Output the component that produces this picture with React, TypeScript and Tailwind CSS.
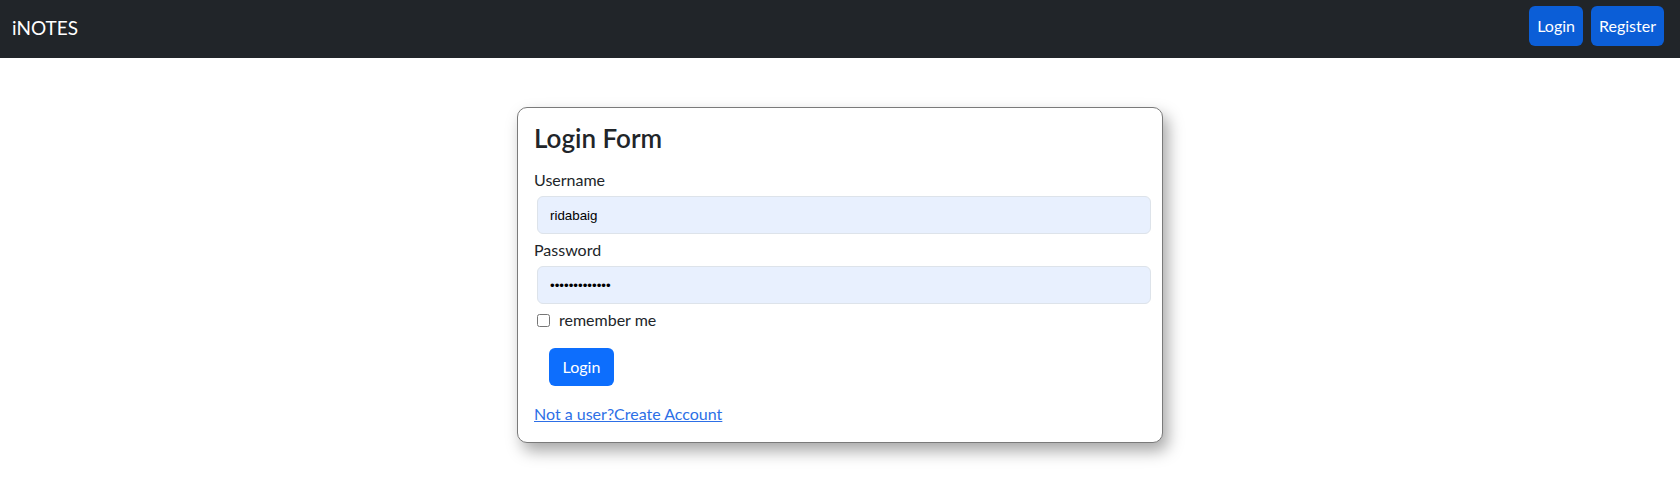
import React from "react";

export default function App() {
  return (
    <div className="min-h-[477px] bg-white font-['Lato','Noto_Sans',sans-serif] text-[#212529]">
      <nav className="flex h-[58px] items-start justify-between bg-[#212529] pl-[12px] pr-[16px]">
        <a href="#" className="mt-[13px] text-[19px] leading-[30px] text-white">
          iNOTES
        </a>
        <div className="mt-[6px] flex gap-[8px]">
          <button className="h-[40px] rounded-[6px] bg-[#0b5ed7] px-[8px] text-[16px] text-white">
            Login
          </button>
          <button className="h-[40px] rounded-[6px] bg-[#0b5ed7] px-[8px] text-[16px] text-white">
            Register
          </button>
        </div>
      </nav>

      <div className="flex justify-center pt-[49px]">
        <div className="w-[646px] rounded-[10px] border border-[#7a7a7a] bg-white px-[16px] pb-[16px] pt-[13px] shadow-[5px_8px_16px_rgba(0,0,0,0.35)]">
          <h3 className="mb-[13px] text-[26px] font-semibold leading-[34px]">Login Form</h3>
          <label className="block text-[16px] leading-[24px]">Username</label>
          <input
            type="text"
            defaultValue="ridabaig"
            readOnly
            className="ml-[3px] mt-[4px] block h-[38px] w-[614px] rounded-[6px] border border-[#dde3ea] bg-[#e8f0fe] px-[12px] font-['Liberation_Sans',Arial,sans-serif] text-[13.33px] text-black outline-none"
          />
          <label className="mt-[4px] block text-[16px] leading-[24px]">Password</label>
          <input
            type="password"
            defaultValue="ridabaig12345"
            readOnly
            className="ml-[3px] mt-[4px] block h-[38px] w-[614px] rounded-[6px] border border-[#dde3ea] bg-[#e8f0fe] px-[12px] font-['Liberation_Sans',Arial,sans-serif] text-[13.33px] text-black outline-none"
          />
          <div className="mt-[4px] flex h-[24px] items-center">
            <input type="checkbox" className="ml-[3px] h-[13px] w-[13px]" />
            <span className="ml-[9px] text-[16px] leading-[24px]">remember me</span>
          </div>
          <button className="ml-[15px] mt-[16px] block h-[38px] w-[65px] rounded-[6px] bg-[#0d6efd] text-[16px] text-white">
            Login
          </button>
          <a href="#" className="mt-[16px] block text-[16px] leading-[24px] text-[#2d6fe6] underline">
            Not a user?Create Account
          </a>
        </div>
      </div>
    </div>
  );
}
